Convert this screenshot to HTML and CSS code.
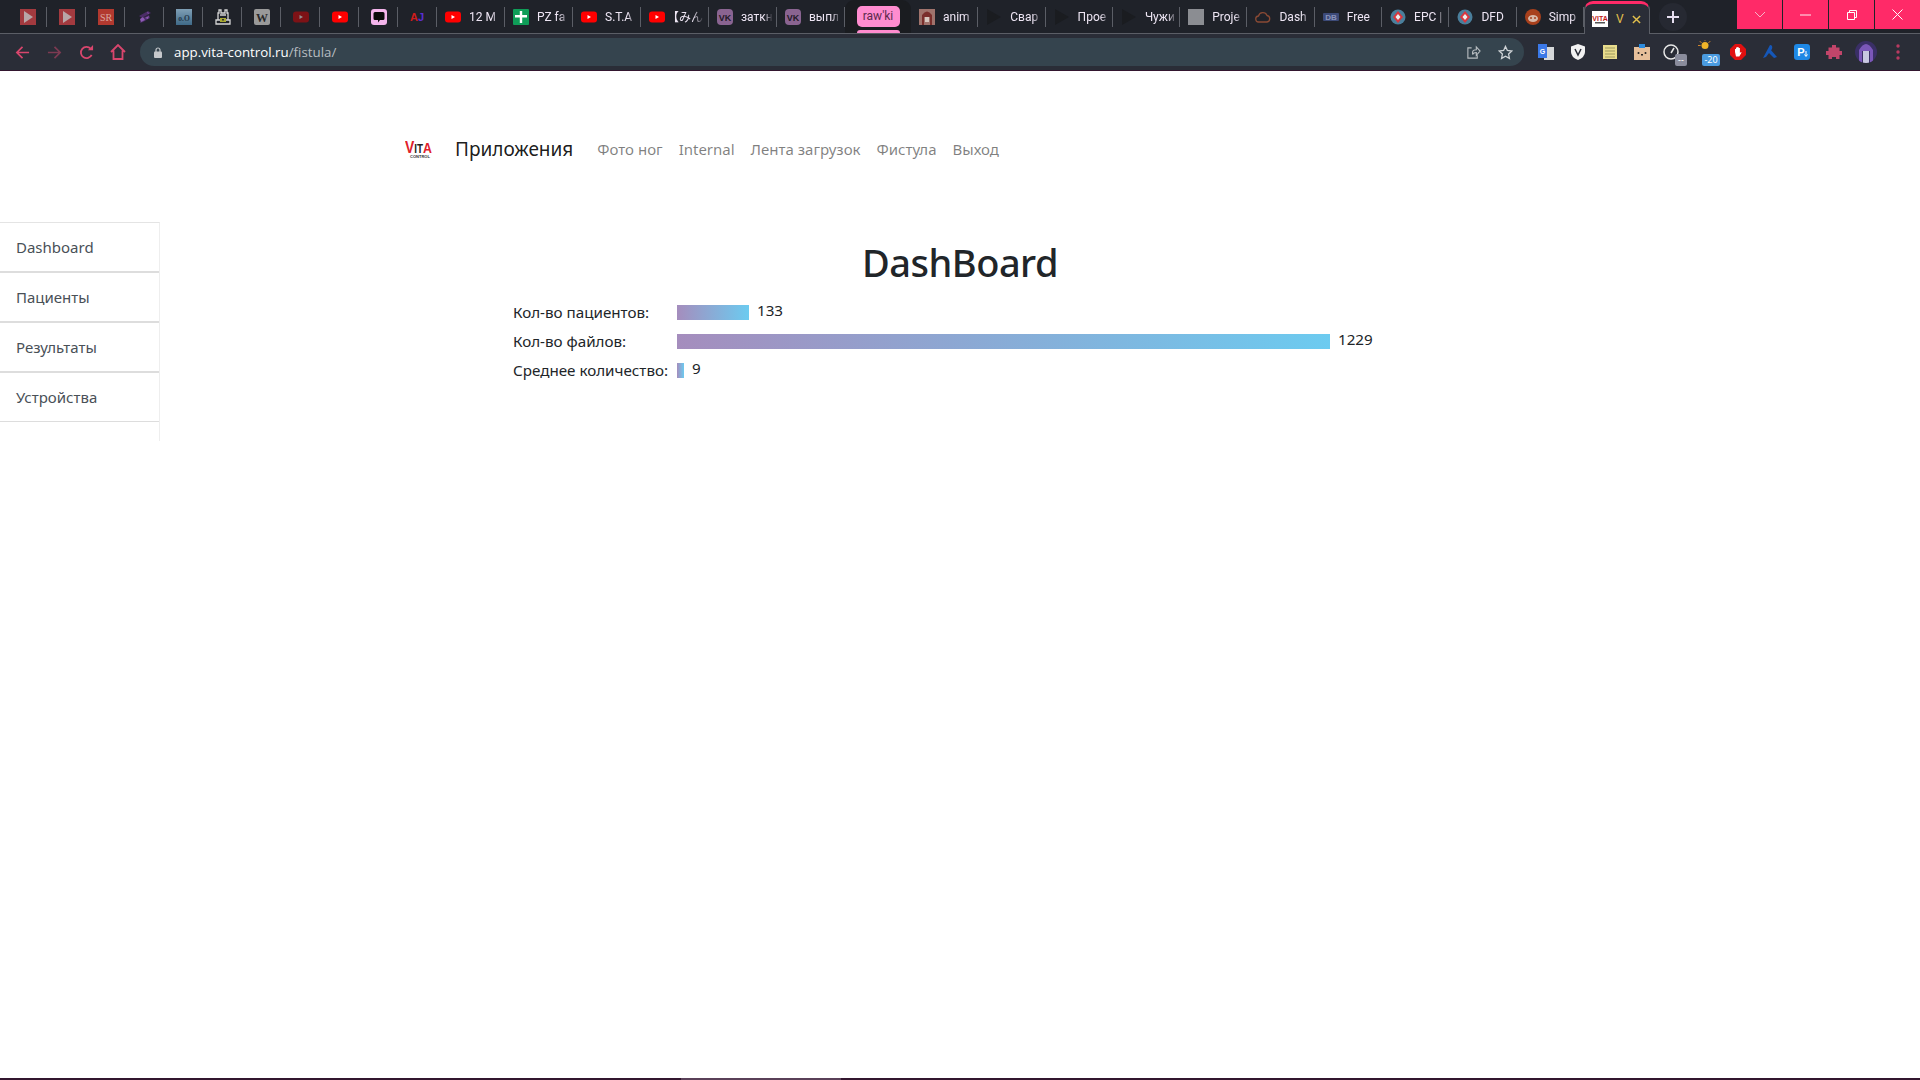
FILE: index.html
```html
<!DOCTYPE html>
<html lang="ru">
	<head>
		<meta charset="UTF-8" />
		<title>Vita Control</title>
		<link rel="stylesheet" href="styles.css">
	</head>
	<body>
		<!-- Browser tabs [start] -->
		<div class="tabstrip">
			<div class="tab pin"><svg class="fav" viewBox="0 0 16 16"><rect width="16" height="16" fill="#a33a3f"/><path d="M4 2l9 6-9 6z" fill="#b8a6a8"/></svg></div>
			<div class="tab pin"><svg class="fav" viewBox="0 0 16 16"><rect width="16" height="16" fill="#a33a3f"/><path d="M4 2l9 6-9 6z" fill="#b8a6a8"/></svg></div>
			<div class="tab pin"><svg class="fav" viewBox="0 0 16 16"><rect width="16" height="16" fill="#b2392f"/><text x="8" y="12" font-size="10" text-anchor="middle" fill="#d9a79f" font-family="Liberation Serif">SR</text></svg></div>
			<div class="tab pin"><svg class="fav" viewBox="0 0 16 16"><path d="M2 7l9-5 3 2-9 5zM4 10l8-4 1 3-7 4-3 1z" fill="#4b2c66"/><path d="M3 10l3-2 2 3-4 2zM10 3l2 1-1 1zM8 9l4-2-1 3z" fill="#8d5bb5"/></svg></div>
			<div class="tab pin"><svg class="fav" viewBox="0 0 16 16"><defs><linearGradient id="oo" x1="0" y1="0" x2="0" y2="1"><stop offset="0" stop-color="#7f9fb5"/><stop offset="1" stop-color="#3f6a88"/></linearGradient></defs><rect width="16" height="16" fill="url(#oo)"/><text x="8" y="12" font-size="7.5" font-weight="bold" text-anchor="middle" fill="#24384a" font-family="Liberation Serif">o.O</text></svg></div>
			<div class="tab pin"><svg class="fav" viewBox="0 0 16 16"><path d="M4 1v3H3v7H1v4h14v-4h-2V4h-1V1h-2v3H6V1zM5 6h6M3 11h10" fill="none" stroke="#d6d6d6" stroke-width="1.3"/><rect x="5" y="9" width="6" height="4" fill="#a8a832"/><rect x="7" y="10" width="2" height="1.5" fill="#333"/></svg></div>
			<div class="tab pin"><svg class="fav" viewBox="0 0 16 16"><rect width="16" height="16" rx="2" fill="#9a9a9a"/><text x="8" y="12.5" font-size="12" font-weight="bold" text-anchor="middle" fill="#2a2a2a" font-family="Liberation Serif">W</text></svg></div>
			<div class="tab pin"><svg class="fav" viewBox="0 0 16 16"><rect y="2.5" width="16" height="11" rx="3" fill="#7d1216"/><path d="M6.5 6l3.5 2-3.5 2z" fill="#8f8f8f"/></svg></div>
			<div class="tab pin"><svg class="fav" viewBox="0 0 16 16"><rect y="2.5" width="16" height="11" rx="3" fill="#f00"/><path d="M6.5 6l3.5 2-3.5 2z" fill="#fff"/></svg></div>
			<div class="tab pin"><svg class="fav" viewBox="0 0 16 16"><rect width="16" height="16" rx="3" fill="#f4b5ec"/><path d="M4 3h8a1.500 1.500 0 0 1 1.500 1.500v5A1.500 1.500 0 0 1 12 11H9l-2 2.500V11H4A1.500 1.500 0 0 1 2.500 9.500v-5A1.500 1.500 0 0 1 4 3z" fill="#0b0b0b"/></svg></div>
			<div class="tab pin"><svg class="fav" viewBox="0 0 16 16"><text x="0" y="12" font-size="11" font-weight="bold" fill="#d01c1c" font-family="Liberation Sans">A</text><text x="8" y="12" font-size="11" font-weight="bold" fill="#5a2fd0" font-family="Liberation Sans">J</text></svg></div>
			<div class="tab"><svg class="fav" viewBox="0 0 16 16"><rect y="2.5" width="16" height="11" rx="3" fill="#f00"/><path d="M6.500 6l3.500 2-3.500 2z" fill="#fff"/></svg><span class="tab-title">12 M</span></div>
			<div class="tab"><svg class="fav" viewBox="0 0 16 16"><rect width="16" height="16" rx="1" fill="#0f9d58"/><path d="M6.800 2h2.400v4H14v2.400H9.200V14H6.800V8.400H2V6h4.800z" fill="#fff"/></svg><span class="tab-title">PZ fa</span></div>
			<div class="tab"><svg class="fav" viewBox="0 0 16 16"><rect y="2.5" width="16" height="11" rx="3" fill="#f00"/><path d="M6.500 6l3.500 2-3.500 2z" fill="#fff"/></svg><span class="tab-title">S.T.A</span></div>
			<div class="tab"><svg class="fav" viewBox="0 0 16 16"><rect y="2.5" width="16" height="11" rx="3" fill="#f00"/><path d="M6.500 6l3.500 2-3.500 2z" fill="#fff"/></svg><span class="tab-title cjk">【みん</span></div>
			<div class="tab"><svg class="fav" viewBox="0 0 16 16"><rect width="16" height="16" rx="4" fill="#8a6491"/><text x="8" y="11.500" font-size="9" font-weight="bold" text-anchor="middle" fill="#241a28" font-family="Liberation Sans">VK</text></svg><span class="tab-title">заткн</span></div>
			<div class="tab"><svg class="fav" viewBox="0 0 16 16"><rect width="16" height="16" rx="4" fill="#8a6491"/><text x="8" y="11.500" font-size="9" font-weight="bold" text-anchor="middle" fill="#241a28" font-family="Liberation Sans">VK</text></svg><span class="tab-title">выпл</span></div>
			<div class="tab-group"><span class="group-chip">raw'ki</span></div>
			<div class="tab tight"><svg class="fav" viewBox="0 0 16 16"><rect width="16" height="16" fill="#a0736c"/><path d="M3 16V6q5-7 10 0v10h-2V8H5v8z" fill="#7a2f2c"/><rect x="6" y="8" width="4" height="5" fill="#d8c8c0"/></svg><span class="tab-title">anim</span></div>
			<div class="tab tight"><svg class="fav" viewBox="0 0 16 16"><path d="M1 0l14 8-14 8z" fill="#1a1c20"/></svg><span class="tab-title">Свар</span></div>
			<div class="tab tight"><svg class="fav" viewBox="0 0 16 16"><path d="M1 0l14 8-14 8z" fill="#1a1c20"/></svg><span class="tab-title">Прое</span></div>
			<div class="tab tight"><svg class="fav" viewBox="0 0 16 16"><path d="M1 0l14 8-14 8z" fill="#1a1c20"/></svg><span class="tab-title">Чужи</span></div>
			<div class="tab tight"><svg class="fav" viewBox="0 0 16 16"><rect width="16" height="16" fill="#8b8d92"/></svg><span class="tab-title">Proje</span></div>
			<div class="tab tight"><svg class="fav" viewBox="0 0 16 16"><path d="M4 13a3 3 0 0 1-.500-6A4.500 4.500 0 0 1 12 6.500a3.300 3.300 0 0 1 0 6.500z" fill="none" stroke="#8a4a34" stroke-width="1.300"/></svg><span class="tab-title">Dash</span></div>
			<div class="tab tight"><svg class="fav" viewBox="0 0 16 16"><rect y="4" width="16" height="8" rx="1" fill="#3c4a78"/><text x="8" y="11" font-size="8" font-weight="bold" text-anchor="middle" fill="#8a92b8" font-family="Liberation Sans">DB</text></svg><span class="tab-title">Free</span></div>
			<div class="tab tight"><svg class="fav" viewBox="0 0 16 16"><circle cx="8" cy="8" r="7.500" fill="#4a7f9c"/><path d="M8 2l5 6-5 6-5-6z" fill="#d9363e"/><path d="M8 5l2.500 3L8 11 5.500 8z" fill="#eee"/></svg><span class="tab-title">EPC |</span></div>
			<div class="tab tight"><svg class="fav" viewBox="0 0 16 16"><circle cx="8" cy="8" r="7.500" fill="#4a7f9c"/><path d="M8 2l5 6-5 6-5-6z" fill="#d9363e"/><path d="M8 5l2.500 3L8 11 5.500 8z" fill="#eee"/></svg><span class="tab-title">DFD</span></div>
			<div class="tab tight"><svg class="fav" viewBox="0 0 16 16"><circle cx="8" cy="8" r="8" fill="#a8401c"/><ellipse cx="8" cy="9.500" rx="5" ry="3.500" fill="#d8b8a8"/><circle cx="6" cy="9" r="1" fill="#a8401c"/><circle cx="10" cy="9" r="1" fill="#a8401c"/></svg><span class="tab-title">Simp</span></div>
			<div class="tab active"><svg class="fav" viewBox="0 0 16 16"><rect width="16" height="16" fill="#fff"/><text x="8" y="9.500" font-size="7" font-weight="bold" text-anchor="middle" fill="#c01818" font-family="Liberation Sans">VITA</text><rect x="3" y="11" width="10" height="1.500" fill="#555"/></svg><span class="tab-title active-title">V</span><svg class="tab-close" viewBox="0 0 10 10"><path d="M1 1l8 8M9 1l-8 8" stroke="#e3c04c" stroke-width="1.600"/></svg></div>
			<div class="newtab"><svg viewBox="0 0 12 12" width="12" height="12"><path d="M6 0v12M0 6h12" stroke="#e6dff0" stroke-width="2"/></svg></div>
			<div class="win-controls">
				<div class="win-btn"><svg viewBox="0 0 12 8" width="12" height="8"><path d="M1 1l5 5 5-5" fill="none" stroke="#f5b5c8" stroke-width="1"/></svg></div>
				<div class="win-btn"><svg viewBox="0 0 12 2" width="11" height="2"><path d="M0 1h12" stroke="#fff" stroke-width="1"/></svg></div>
				<div class="win-btn"><svg viewBox="0 0 10 10" width="10" height="10"><path d="M2.500 2.500V.5h7v7h-2M.5 2.500h7v7h-7z" fill="none" stroke="#fff" stroke-width="1"/></svg></div>
				<div class="win-btn"><svg viewBox="0 0 11 11" width="11" height="11"><path d="M.5.5l10 10M10.500.5l-10 10" stroke="#fff" stroke-width="1"/></svg></div>
			</div>
		</div>
		<!-- Browser tabs [end  ] -->

		<!-- Browser toolbar [start] -->
		<div class="toolbar">
			<div class="tool"><svg viewBox="0 0 16 16" width="15" height="15"><path d="M15 8H2M8 2L2 8l6 6" fill="none" stroke="#d9466d" stroke-width="1.800"/></svg></div>
			<div class="tool"><svg viewBox="0 0 16 16" width="15" height="15"><path d="M1 8h13M8 2l6 6-6 6" fill="none" stroke="#7d3a52" stroke-width="1.800"/></svg></div>
			<div class="tool"><svg viewBox="0 0 16 16" width="15" height="15"><path d="M13.500 10.500A6 6 0 1 1 12.500 4" fill="none" stroke="#d9466d" stroke-width="1.900"/><path d="M9.500 5.500H15V0z" fill="#d9466d"/></svg></div>
			<div class="tool"><svg viewBox="0 0 16 16" width="16" height="16"><path d="M1 8l7-7 7 7M3.500 6.500V15h9V6.500" fill="none" stroke="#d9466d" stroke-width="1.800"/></svg></div>
			<div class="omnibox">
				<svg class="lock" viewBox="0 0 8 11" width="8" height="11"><path d="M2 5V3a2 2 0 0 1 4 0v2" fill="none" stroke="#c6c9cc" stroke-width="1.200"/><rect y="4.500" width="8" height="6.500" rx="1" fill="#c6c9cc"/></svg>
				<span class="url">app.vita-control.ru<span class="url-path">/fistula/</span></span>
				<svg class="omni-icon" viewBox="0 0 16 16" width="15" height="15"><path d="M6 3H2v11h10v-3M7 10V8q0-3 4-3V2l4 4.500L11 11V8q-3 0-4 2z" fill="none" stroke="#b7bcc0" stroke-width="1.200"/></svg>
				<svg class="omni-icon" viewBox="0 0 16 16" width="15" height="15"><path d="M8 1.500l2 4.300 4.700.6-3.400 3.200.9 4.700L8 12l-4.200 2.300.9-4.700L1.300 6.400 6 5.800z" fill="none" stroke="#cfd3d6" stroke-width="1.400"/></svg>
			</div>
			<div class="extensions">
				<div class="tool"><svg viewBox="0 0 16 16" width="16" height="16"><rect x="6" y="3" width="10" height="13" fill="#d6d8da"/><path d="M0 0h9v14H0z" fill="#3b78e7"/><text x="4.500" y="10" font-size="7" font-weight="bold" text-anchor="middle" fill="#fff" font-family="Liberation Sans">G</text></svg></div>
				<div class="tool"><svg viewBox="0 0 16 16" width="16" height="16"><path d="M8 0l7 2.500V8q0 5-7 8-7-3-7-8V2.500z" fill="#f2f2f2"/><path d="M5 5l3 6 3-6" fill="none" stroke="#2a2d37" stroke-width="1.500"/></svg></div>
				<div class="tool"><svg viewBox="0 0 14 14" width="14" height="14"><rect width="14" height="14" fill="#e8dc8c"/><path d="M2 3h10M2 6h10M2 9h10M2 12h10" stroke="#9e9a60"/></svg></div>
				<div class="tool"><svg viewBox="0 0 16 16" width="16" height="16"><rect y="3" width="16" height="13" fill="#e6bf9a"/><rect x="5" y="0" width="6" height="4" fill="#2e8bdc"/><circle cx="4.500" cy="9" r="1" fill="#222"/><circle cx="11.500" cy="9" r="1" fill="#222"/><rect x="7" y="10" width="2" height="1.500" fill="#222"/></svg></div>
				<div class="tool ext-badged"><svg viewBox="0 0 16 16" width="16" height="16" class="gauge"><circle cx="8" cy="8" r="7" fill="none" stroke="#e6e6e6" stroke-width="1.500"/><path d="M8 9l3-5" stroke="#e6e6e6" stroke-width="1.500"/></svg><span class="ext-badge gray">--</span></div>
				<div class="tool ext-badged"><svg viewBox="0 0 16 12" width="14" height="11" class="sun"><circle cx="8" cy="6" r="4" fill="#f0b429"/><path d="M0 6h3M8 0v1M2 1l2 2M14 1l-2 2" stroke="#e8912a"/></svg><span class="ext-badge blue">-20</span></div>
				<div class="tool"><svg viewBox="0 0 16 16" width="16" height="16"><path d="M5 0h6l5 5v6l-5 5H5l-5-5V5z" fill="#e01010"/><path d="M5 8V5h1v2-3.500h1.300V7 3h1.300v4-3h1.300v5l1-1 .7.6-2.300 3.900H6z" fill="#fff"/></svg></div>
				<div class="tool"><svg viewBox="0 0 16 16" width="16" height="16"><path d="M8 1q3 0 2 4l-6 8-3 1zM8 5l7 8-3 1-6-6" fill="#1557b8"/></svg></div>
				<div class="tool"><svg viewBox="0 0 16 16" width="16" height="16"><rect width="16" height="16" rx="3" fill="#1e88e5"/><text x="7" y="12" font-size="11" font-weight="bold" text-anchor="middle" fill="#fff" font-family="Liberation Sans">P</text><path d="M12 7v5M10.500 10.500l1.500 2 1.500-2" stroke="#fff" fill="none"/></svg></div>
				<div class="tool"><svg viewBox="0 0 16 16" width="16" height="16"><path d="M6 1h4v2.500h3.500V7H16v4h-2.500v4H10v-2H6v2H2.500v-4H0V7h2.500V3.500H6z" fill="#c2456a"/></svg></div>
				<div class="tool"><svg viewBox="0 0 22 22" width="22" height="22"><defs><clipPath id="av"><circle cx="11" cy="11" r="11"/></clipPath></defs><g clip-path="url(#av)"><rect width="22" height="22" fill="#3a2f66"/><path d="M4 22V9q7-12 14 0v13h-3V10H7v12z" fill="#7b57b8"/><rect x="8" y="10" width="6" height="12" fill="#c8c8e0"/></g></svg></div>
				<div class="tool"><svg viewBox="0 0 4 16" width="4" height="16"><circle cx="2" cy="2" r="1.700" fill="#b83a60"/><circle cx="2" cy="8" r="1.700" fill="#b83a60"/><circle cx="2" cy="14" r="1.700" fill="#b83a60"/></svg></div>
			</div>
		</div>
		<!-- Browser toolbar [end  ] -->

		<!-- Site navbar -->
		<nav class="navbar">
			<svg class="logo" viewBox="0 0 28 20" width="28" height="20">
				<text x="0" y="14" textLength="27" lengthAdjust="spacingAndGlyphs" font-weight="bold" font-family="Liberation Sans"><tspan font-size="17" fill="#e0202a">V</tspan><tspan font-size="12" fill="#222">IT</tspan><tspan font-size="15" fill="#e0202a">A</tspan></text>
				<text x="15" y="19" font-size="4" font-weight="bold" text-anchor="middle" fill="#333" font-family="Liberation Sans">CONTROL</text>
			</svg>
			<a class="brand">Приложения</a>
			<a class="nav-link">Фото ног</a>
			<a class="nav-link">Internal</a>
			<a class="nav-link">Лента загрузок</a>
			<a class="nav-link">Фистула</a>
			<a class="nav-link">Выход</a>
		</nav>

		<div class="page-row">
			<div class="sidebar">
				<a class="side-item">Dashboard</a>
				<a class="side-item">Пациенты</a>
				<a class="side-item">Результаты</a>
				<a class="side-item last">Устройства</a>
			</div>
			<div class="content">
				<h1>DashBoard</h1>
				<div class="chart">
					<div class="chart-row">
						<span class="chart-label">Кол-во пациентов:</span>
						<span class="chart-bar" style="width:72px"></span>
						<span class="chart-value">133</span>
					</div>
					<div class="chart-row">
						<span class="chart-label">Кол-во файлов:</span>
						<span class="chart-bar" style="width:653px"></span>
						<span class="chart-value">1229</span>
					</div>
					<div class="chart-row">
						<span class="chart-label">Среднее количество:</span>
						<span class="chart-bar" style="width:7px"></span>
						<span class="chart-value">9</span>
					</div>
				</div>
			</div>
		</div>

		<!-- Taskbar edge at the very bottom of the screen -->
		<div class="screen-edge"><div class="edge-mark"></div></div>
	</body>
</html>
```
FILE: styles.css
```css
/* Base styles */
html, body {
	height: 100%;
}
body {
	display: flex;
	flex-direction: column;
	margin: 0px;
	background: #fff;
	color: #212529;
	font-family: "Noto Sans", "Open Sans", sans-serif;
	overflow: hidden;
}
svg {
	display: block;
	flex: none;
}
/* Tab strip */
.tabstrip {
	display: flex;
	height: 33px;
	padding-left: 8px;
	background: #1f2229;
	border-bottom: 1px solid #5b5e66;
	font-family: Roboto, "Noto Sans", "Noto Sans CJK JP", sans-serif;
}
.tab {
	position: relative;
	display: flex;
	align-items: center;
	gap: 8px;
	box-sizing: border-box;
	width: 68px;
	padding-left: 8px;
}
.tab.tight {
	width: 67.3px;
}
.tab::after {
	content: "";
	position: absolute;
	top: 7px;
	bottom: 6px;
	right: 0;
	width: 1px;
	background: #5b5e66;
}
.tab.pin {
	width: 39px;
	padding-left: 12px;
}
.fav {
	width: 16px;
	height: 16px;
}
.tab-title {
	width: 32px;
	overflow: hidden;
	white-space: nowrap;
	font-size: 12px;
	color: #eee6f4;
	-webkit-mask-image: linear-gradient(to right, #000 70%, transparent);
	mask-image: linear-gradient(to right, #000 70%, transparent);
}
.tab-title.cjk {
	width: 37px;
	margin-left: -6px;
}
/* Collapsed group chip */
.tab-group {
	display: flex;
	flex-direction: column;
	align-items: center;
	box-sizing: border-box;
	width: 66px;
	padding-top: 6px;
	border-radius: 9px 9px 0 0;
	background: #1a1c20;
}
.tab-group::after {
	content: "";
	width: 43px;
	height: 3px;
	margin-top: auto;
	border-radius: 3px 3px 0 0;
	background: #ff8ccf;
}
.group-chip {
	width: 43px;
	height: 21px;
	border-radius: 5px;
	background: #ff8ccf;
	color: #5c2a4c;
	font-size: 12px;
	line-height: 21px;
	text-align: center;
}
/* Active tab */
.tab.active {
	width: 66px;
	height: 33px;
	margin-top: 1px;
	padding-left: 7px;
	background: #2a2d37;
	border: 1px solid #5b5e66;
	border-top: 3px solid #ff2a68;
	border-bottom: none;
	border-radius: 9px 9px 0 0;
}
.tab.active::after {
	display: none;
}
.active-title {
	width: 10px;
	color: #e3c04c;
	-webkit-mask-image: none;
	mask-image: none;
}
.tab-close {
	width: 9px;
	height: 9px;
	margin-left: -2px;
}
.newtab {
	display: flex;
	align-items: center;
	justify-content: center;
	width: 28px;
	height: 28px;
	margin: 3px 0 0 9px;
	border-radius: 50%;
	background: #262932;
}
/* Window buttons */
.win-controls {
	display: flex;
	gap: 1px;
	height: 29px;
	margin-left: auto;
}
.win-btn {
	display: flex;
	align-items: center;
	justify-content: center;
	width: 45px;
	background: #ff2a68;
}
/* Toolbar */
.toolbar {
	display: flex;
	align-items: center;
	box-sizing: border-box;
	height: 37px;
	padding: 0 6px;
	background: #2a2d37;
	border-bottom: 1px solid #33162f;
}
.tool {
	position: relative;
	display: flex;
	align-items: center;
	justify-content: center;
	flex: none;
	width: 32px;
	height: 28px;
}
.omnibox {
	display: flex;
	align-items: center;
	flex: 1;
	height: 28px;
	margin: 0 6px;
	padding: 0 11px 0 14px;
	border-radius: 14px;
	background: #35444e;
	gap: 17px;
}
.lock {
	margin-right: -5px;
}
.url {
	flex: 1;
	font-family: "Open Sans", sans-serif;
	font-size: 13.3px;
	color: #fff;
}
.url-path {
	color: #b7bcc0;
}
.extensions {
	display: flex;
}
.ext-badge {
	position: absolute;
	right: 3px;
	bottom: 0;
	min-width: 12px;
	border-radius: 2px;
	font-size: 9px;
	line-height: 12px;
	text-align: center;
	color: #fff;
}
.ext-badge.gray {
	background: #8a8c9c;
}
.ext-badge.blue {
	right: 2px;
	width: 18px;
	background: #4a9be0;
}
.ext-badged .gauge {
	margin-right: 7px;
}
.ext-badged .sun {
	margin: 0 2px 14px 0;
}
/* Site navbar */
.navbar {
	display: flex;
	align-items: center;
	box-sizing: border-box;
	width: 1140px;
	height: 151px;
	margin: 0 auto;
	padding: 5px 15px 0 15px;
}
.logo {
	margin-right: 22px;
}
.brand {
	margin-right: 16px;
	font-size: 19px;
	color: rgba(0, 0, 0, 0.9);
}
.nav-link {
	padding: 0 8px;
	font-size: 15px;
	color: rgba(0, 0, 0, 0.5);
}
/* Page body */
.page-row {
	display: grid;
	grid-template-columns: 160px 1fr 160px;
	flex: 1;
}
.sidebar {
	display: flex;
	flex-direction: column;
	box-sizing: border-box;
	height: 219px;
	border-top: 1px solid #e4e4e4;
	border-right: 1px solid #eee;
}
.side-item {
	box-sizing: border-box;
	height: 50px;
	padding-left: 16px;
	border-bottom: 2px solid #ddd;
	font-size: 15px;
	line-height: 48px;
	color: #495057;
}
.side-item.last {
	height: 49px;
	border-bottom-width: 1px;
}
.content {
	padding-top: 16px;
}
h1 {
	margin: 0 0 12px;
	font-size: 38px;
	font-weight: 500;
	letter-spacing: -0.5px;
	line-height: 48px;
	text-align: center;
}
/* Bar chart */
.chart {
	margin-left: 353px;
}
.chart-row {
	display: flex;
	align-items: center;
	height: 29px;
	font-size: 15.2px;
}
.chart-label {
	width: 164px;
	flex: none;
	padding-bottom: 2px;
}
.chart-bar {
	height: 15px;
	background: linear-gradient(to right, #a58dbd, #6ccbf0);
}
.chart-value {
	margin-left: 8px;
	padding-bottom: 6px;
}
/* Bottom edge */
.screen-edge {
	flex: none;
	height: 2px;
	background: #33162f;
}
.edge-mark {
	width: 160px;
	height: 2px;
	margin-left: 681px;
	background: #5a4058;
}
```
